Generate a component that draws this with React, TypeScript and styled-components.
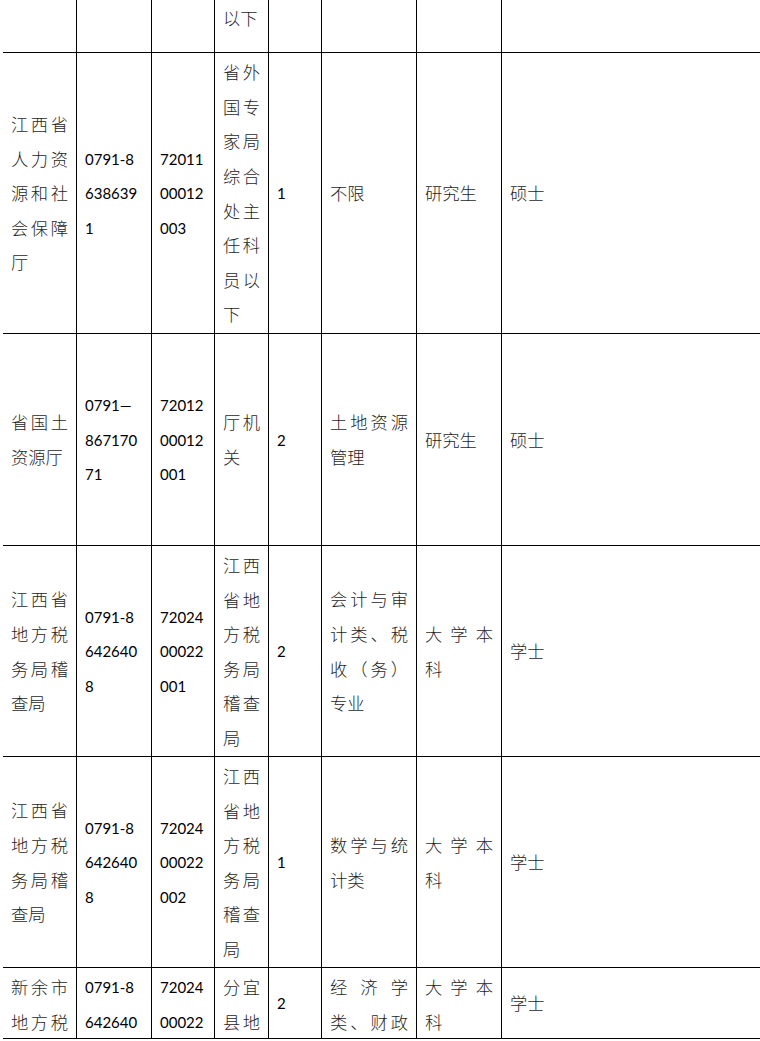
import React from 'react';
import styled, { createGlobalStyle } from 'styled-components';

const GlobalStyle = createGlobalStyle`
	html, body {
		margin: 0;
		padding: 0;
		background: #fff;
	}
	body {
		font-family: 'Noto Sans CJK SC', sans-serif;
		color: #1a1a1a;
	}
`;

const COLUMNS = '74px 75px 63px 54px 53px 95px 85px 1fr';

const Sheet = styled.div`
	padding-left: 3px;
	width: 757px;
	overflow: hidden;
`;

const Row = styled.div<{ $height: number }>`
	display: grid;
	grid-template-columns: ${COLUMNS};
	height: ${props => props.$height}px;
	border-bottom: 1px solid #000;
	box-sizing: border-box;
`;

const Cell = styled.div<{ $last?: boolean; $top?: boolean }>`
	display: flex;
	flex-direction: column;
	box-sizing: border-box;
	padding: ${props => (props.$top ? '1px' : '2px')} 8px 1px 8px;
	border-right: ${props => (props.$last ? 'none' : '1px solid #000')};
	overflow: hidden;
	min-width: 0;
`;

const Content = styled.div<{ $num?: boolean; $top?: boolean; $cut?: boolean }>`
	margin-top: ${props => (props.$top ? '0' : 'auto')};
	margin-bottom: auto;
	font-family: ${props =>
		props.$num ? "Lato, 'Noto Sans CJK SC', sans-serif" : "'Noto Sans CJK SC', sans-serif"};
	font-size: ${props => (props.$num ? '15px' : '17.3px')};
	font-weight: ${props => (props.$num ? 400 : 300)};
	color: ${props => (props.$num ? '#000' : '#1e1e1e')};
	line-height: 34.6px;
	text-align: justify;
	text-align-last: ${props => (props.$cut ? 'justify' : 'auto')};
	word-break: normal;
	line-break: strict;
`;

type CellData = string | string[];

type RowData = {
	height: number;
	top?: boolean;
	cutCols?: number[];
	cells: CellData[];
};

// the sheet is a page of a longer table: the first row ends a row of the
// previous page and the last row goes on past the page foot
const rows: RowData[] = [
	{ height: 53, top: true, cells: ['', '', '', '以下', '', '', '', ''] },
	{
		height: 281,
		cells: [
			'江西省人力资源和社会保障厅',
			['0791-8', '638639', '1'],
			['72011', '00012', '003'],
			'省外国专家局综合处主任科员以下',
			['1'],
			'不限',
			'研究生',
			'硕士'
		]
	},
	{
		height: 212,
		cells: [
			'省国土资源厅',
			['0791—', '867170', '71'],
			['72012', '00012', '001'],
			'厅机关',
			['2'],
			'土地资源管理',
			'研究生',
			'硕士'
		]
	},
	{
		height: 211,
		cells: [
			'江西省地方税务局稽查局',
			['0791-8', '642640', '8'],
			['72024', '00022', '001'],
			'江西省地方税务局稽查局',
			['2'],
			'会计与审计类、税收（务）专业',
			'大学本科',
			'学士'
		]
	},
	{
		height: 211,
		cells: [
			'江西省地方税务局稽查局',
			['0791-8', '642640', '8'],
			['72024', '00022', '002'],
			'江西省地方税务局稽查局',
			['1'],
			'数学与统计类',
			'大学本科',
			'学士'
		]
	},
	{
		height: 71,
		cutCols: [0, 3, 5],
		cells: [
			'新余市地方税',
			['0791-8', '642640'],
			['72024', '00022'],
			'分宜县地',
			['2'],
			'经济学类、财政',
			'大学本科',
			'学士'
		]
	}
];

const renderCell = (data: CellData, row: RowData, col: number) => {
	if (Array.isArray(data)) {
		return (
			<Content $num $top={row.top}>
				{data.map((line, i) => (
					<React.Fragment key={i}>
						{i > 0 && <br />}
						{line}
					</React.Fragment>
				))}
			</Content>
		);
	}
	return (
		<Content $top={row.top} $cut={row.cutCols?.includes(col)}>
			{data}
		</Content>
	);
};

export default function App() {
	return (
		<>
			<GlobalStyle />
			<Sheet lang="zh-CN">
				{rows.map((row, r) => (
					<Row key={r} $height={row.height}>
						{row.cells.map((cell, c) => (
							<Cell key={c} $top={row.top} $last={c === row.cells.length - 1}>
								{renderCell(cell, row, c)}
							</Cell>
						))}
					</Row>
				))}
			</Sheet>
		</>
	);
}
